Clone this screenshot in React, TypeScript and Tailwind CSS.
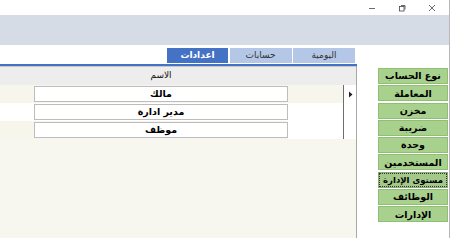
import React from "react";

const font = { fontFamily: '"DejaVu Sans", "Noto Sans", sans-serif' };

function TitleBar() {
  return (
    <div className="h-[15px] flex justify-end items-center bg-white">
      <div className="w-[30px] h-[15px] flex items-center justify-center">
        <svg width="8" height="8" viewBox="0 0 8 8">
          <line x1="1" y1="4.5" x2="7" y2="4.5" stroke="#444" strokeWidth="0.8" />
        </svg>
      </div>
      <div className="w-[30px] h-[15px] flex items-center justify-center">
        <svg width="8" height="8" viewBox="0 0 8 8">
          <rect x="1.5" y="2.5" width="4.5" height="4.5" fill="none" stroke="#444" strokeWidth="0.8" />
          <path d="M3 1.5 H7 V5.5" fill="none" stroke="#444" strokeWidth="0.8" />
        </svg>
      </div>
      <div className="w-[30px] h-[15px] flex items-center justify-center mr-[2px]">
        <svg width="8" height="8" viewBox="0 0 8 8">
          <path d="M1 1 L7 7 M7 1 L1 7" stroke="#444" strokeWidth="0.8" />
        </svg>
      </div>
    </div>
  );
}

const tabs = [
  { label: "اعدادات", active: true, w: "w-[61px]" },
  { label: "حسابات", active: false, w: "w-[62px]" },
  { label: "اليومية", active: false, w: "w-[62px]" },
];

const rows = [
  { name: "مالك", left: "bg-[#f6f6ed]", right: "bg-[#f6f6ed]", arrow: true },
  { name: "مدير ادارة", left: "bg-white", right: "bg-white", arrow: false },
  { name: "موظف", left: "bg-[#f6f6ed]", right: "bg-white", arrow: false },
];

const buttons = [
  "نوع الحساب",
  "المعاملة",
  "مخزن",
  "ضريبة",
  "وحدة",
  "المستخدمين",
  "مستوى الإدارة",
  "الوظائف",
  "الإدارات",
];

export default function App() {
  return (
    <div className="w-[451px] h-[238px] overflow-hidden bg-white" style={font}>
      <div className="w-[450px] h-[238px] border-r border-[#b8b8b8] flex flex-col">
        <TitleBar />
        <div className="h-[30px] bg-[#d6dce5]" />
        <div className="flex flex-1">
          {/* left area */}
          <div className="w-[357px] flex flex-col">
            <div className="h-[19px] flex justify-end items-end pr-[2px] gap-[1.5px] pb-[1px]">
              {tabs.map((t) => (
                <div
                  key={t.label}
                  className={`${t.w} h-[15px] flex items-center justify-center text-[9px] leading-none whitespace-nowrap ${
                    t.active ? "bg-[#4472c4] text-white font-bold" : "bg-[#b4c7e7] text-[#333]"
                  }`}
                  dir="rtl"
                >
                  {t.label}
                </div>
              ))}
            </div>
            <div className="h-[2px] bg-[#4472c4]" />
            <div className="flex-1 flex flex-col border-r border-[#a8a8a8] bg-[#f7f7ef]">
              <div className="h-[19px] border-t border-[#c8c8c8] bg-[#ededed] flex">
                <div className="w-[34px]" />
                <div className="w-[254px] flex items-center justify-center text-[9px] text-[#111]" dir="rtl">
                  الاسم
                </div>
              </div>
              {rows.map((r) => (
                <div key={r.name} className="h-[18px] flex">
                  <div className={`w-[34px] ${r.left}`} />
                  <div className={`w-[254px] flex items-center ${r.left}`}>
                    <div
                      className="w-full h-[16px] bg-white border border-[#bdbdbd] flex items-center justify-center text-[9.5px] font-bold text-black leading-none whitespace-nowrap"
                      dir="rtl"
                    >
                      {r.name}
                    </div>
                  </div>
                  <div className={`w-[55px] ${r.right}`} />
                  <div className="flex-1 bg-white border-l border-[#6e6e6e] flex items-center justify-center">
                    {r.arrow && (
                      <svg width="5" height="7" viewBox="0 0 5 7">
                        <path d="M1 0.5 L4.5 3.5 L1 6.5 Z" fill="#222" />
                      </svg>
                    )}
                  </div>
                </div>
              ))}
            </div>
          </div>
          {/* spacer */}
          <div className="w-[21px]" />
          {/* buttons */}
          <div className="w-[70px] flex flex-col pt-[23px] gap-[1.3px]">
            {buttons.map((b) => {
              const sel = b === "مستوى الإدارة";
              return (
                <div
                  key={b}
                  className={`h-[16px] border flex items-center justify-center font-bold text-black leading-none whitespace-nowrap overflow-hidden ${
                    sel ? "bg-[#a3c98a] border-[#8aa878] text-[8.5px]" : "bg-[#a9d18e] border-[#8fbf72] text-[9.5px]"
                  }`}
                  dir="rtl"
                >
                  {sel ? (
                    <div className="w-full h-full border border-dotted border-[#333] flex items-center justify-center">
                      {b}
                    </div>
                  ) : (
                    b
                  )}
                </div>
              );
            })}
          </div>
        </div>
      </div>
    </div>
  );
}
